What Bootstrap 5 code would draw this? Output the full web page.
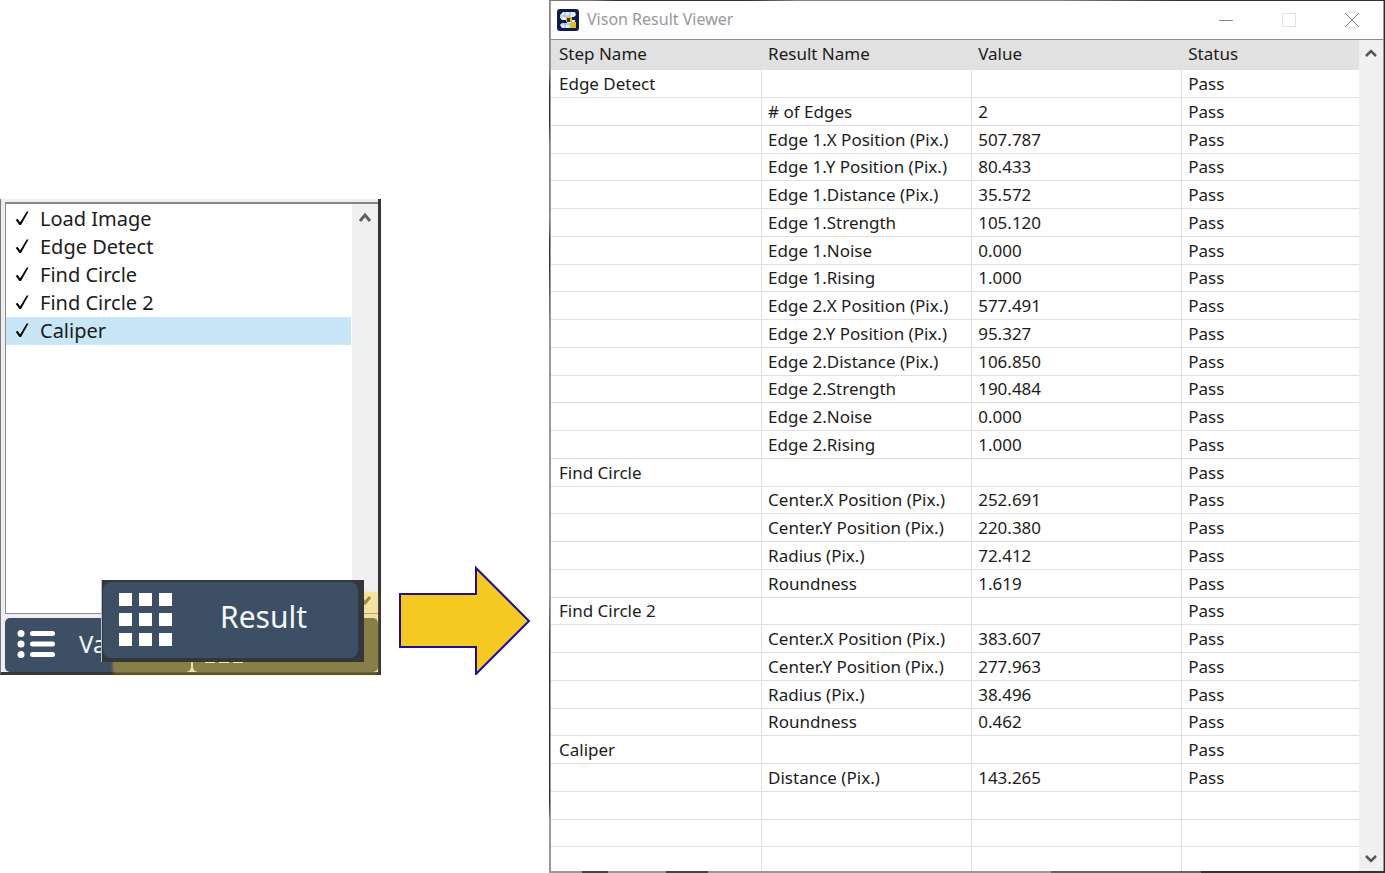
<!DOCTYPE html>
<html lang="en">
<head>
<meta charset="utf-8">
<meta name="viewport" content="width=device-width, initial-scale=1">
<title>Vison Result Viewer</title>
<link href="https://cdn.jsdelivr.net/npm/bootstrap@5.3.0/dist/css/bootstrap.min.css" rel="stylesheet">
<style>
body{font-family:"Noto Sans","Open Sans",sans-serif;color:#1c1c20;background:#fff}
.stage{display:grid;grid-template-columns:381fr 168fr 836fr;height:100vh;min-height:700px}
.stage>*{min-width:0}
/* step list */
.steps-frame{border:solid #35353a;border-width:0 3px 3px 1px;border-left-color:#77777c;padding-left:4px;background:#eeeef2}
.steps-area{border-left:1px solid #8c8c90;border-top:2px solid #858588;border-bottom:1px solid #8c8c90;height:412px;margin-top:3px;background:#fff}
.step-list{padding-top:1px}
.step{height:28px;padding-left:9px;font-size:20px;line-height:28px;margin-right:1px}
.step.active-step{background:#c8e6f7}
.step input{appearance:none;width:15px;height:15px;margin:0 10px 0 0;background:#000;clip-path:polygon(4% 58%,18% 54%,34% 76%,78% 4%,90% 4%,40% 94%,30% 94%)}
.scrollbar-v{width:26px;background:#f0f0f0;flex:none}
.win-frame .scrollbar-v{width:24px}
.plain{border:0;background:none;padding:0;display:block;line-height:0}
.tool{border:0;background:#3d4f64;color:#f4f8fb;border-radius:5px;height:54px;padding:0 0 2px 12px;font-size:24px;text-align:left;white-space:nowrap;overflow:hidden}
.glow{right:0;bottom:0;width:70%;height:80px;background:rgba(249,203,34,.39);box-shadow:-1px 0 3px rgba(249,203,34,.39),0 4px 4px rgba(249,203,34,.2);pointer-events:none}
.callout{left:100px;right:14px;bottom:10px;height:82px;background:#35363c;padding:2px 6px 4px 1px;border-left:1px solid #b9c0c9}
.callout button{border:0;background:#3d4f64;color:#f4f8fb;border-radius:8px;font-size:30px;line-height:1;padding:0 0 0 16px;text-align:left}
.callout span{padding-bottom:6px}
.arrow-cell{padding:565px 0 0 18px}
/* result window */
.win-frame{padding:1px 2px 2px;background:
 linear-gradient(90deg,#999 0 4%,#444 4% 7%,#999 7% 14%,#444 14% 19%,#999 19% 60%,#666 60% 78%,#333 78%) bottom/100% 2px no-repeat,
 linear-gradient(#888 0 8%,#333 10% 14%,#888 17% 25%,#333 28% 30%,#999 38% 68%,#333 74% 92%,#999 94%) left/1px 100% no-repeat,
 linear-gradient(#2d2d2d,#2d2d2d) right/1px 100% no-repeat,
 linear-gradient(90deg,#777 0 5%,#333 8% 24%,#888 30% 60%,#333 75%) top/100% 1px no-repeat,#999}
.titlebar{height:39px;padding-left:6px;font-size:16px;color:#97979b;border-bottom:1px solid #8d8d8d}
.titlebar>span{padding-bottom:2px}
.winbtn{width:63px;height:38px}
.results{table-layout:fixed;width:100%;border-collapse:separate;border-spacing:0;font-size:17px;line-height:20px}
.results th{height:30px;background:#e1e1e1;font-weight:400;padding:0 0 3px 7px}
.results td{height:28px;padding:0 0 0 6px;white-space:nowrap;border-bottom:1px solid #dfdfe1;border-left:1px solid #dfdfe1}
.results tr:nth-child(4n) td{height:27px}
.results td:first-child{border-left:0;padding-left:8px}
.results th:first-child{padding-left:8px}
.results th:nth-child(-n+3){width:26%}
</style>
</head>
<body>
<main class="stage">
 <section class="align-self-center steps-frame position-relative" aria-label="Steps">
  <div class="d-flex steps-area">
   <div class="flex-grow-1 step-list" id="steps"></div>
   <div class="scrollbar-v d-flex flex-column justify-content-between align-items-center py-2">
    <button class="plain" aria-label="Scroll up"><svg width="14" height="12"><path d="M2 9 7 3l5 6" fill="none" stroke="#606060" stroke-width="3"/></svg></button>
    <button class="plain" aria-label="Scroll down"><svg width="14" height="12"><path d="M2 3 7 10l5-6" fill="none" stroke="#606060" stroke-width="3"/></svg></button>
   </div>
  </div>
  <div class="d-flex pt-1" style="gap:2px">
   <button class="tool flex-fill w-50 d-flex align-items-center"><svg width="38" height="28" class="me-4 flex-shrink-0" fill="#fff"><circle cx="4" cy="3.500" r="3.500"/><circle cx="4" cy="14" r="3.500"/><circle cx="4" cy="24.500" r="3.500"/><rect x="13" y="1" width="25" height="5" rx="2.500"/><rect x="13" y="11.500" width="25" height="5" rx="2.500"/><rect x="13" y="22" width="25" height="5" rx="2.500"/></svg>Va</button>
   <button class="tool flex-fill w-50 d-flex align-items-center" aria-label="Result grid"><svg width="38" height="38" fill="#fff"><path d="M0 0h10v10H0zM14 0h10v10H14zM28 0h10v10H28zM0 14h10v10H0zM14 14h10v10H14zM28 14h10v10H28zM0 28h10v10H0zM14 28h10v10H14zM28 28h10v10H28z"/></svg></button>
  </div>
  <div class="glow position-absolute"></div>
  <div class="callout position-absolute">
   <button class="w-100 h-100 d-flex align-items-center"><svg width="53" height="53" class="me-5" fill="#fff"><path d="M0 0h13v13H0zM20 0h13v13H20zM40 0h13v13H40zM0 20h13v13H0zM20 20h13v13H20zM40 20h13v13H40zM0 40h13v13H0zM20 40h13v13H20zM40 40h13v13H40z"/></svg><span>Result</span></button>
  </div>
 </section>
 <div class="arrow-cell"><svg width="132" height="110"><path d="M1 29H77V3L130 56 77 109V82H1z" fill="#f4ca22" stroke="#1e0f96" stroke-width="2"/></svg></div>
 <section class="win-frame d-flex flex-column overflow-hidden">
  <header class="titlebar d-flex align-items-center bg-white flex-shrink-0">
   <svg width="22" height="22" class="me-2" viewBox="0 0 22 22"><rect width="22" height="22" rx="3" fill="#0d1c4d"/><path d="M6 3h12l1 3-2 2h-5v3h6v8H5l-2-3 2-2h5v-3H5L3 9V6z" fill="#e6edf8"/><path d="M3 7h9M5 15h9M8 3v5M13 3v5M8 14v5M13 14v5" stroke="#9aaedb"/><path d="M9 8h6v5H9zM14 13h5v6h-5z" fill="#e5b91d"/><path d="M10 9h3v4h-3z" fill="#3b3a25"/></svg>
   <span class="me-auto">Vison Result Viewer</span>
   <button class="plain winbtn" aria-label="Minimize"><svg width="14" height="14"><path d="M0 7.500h14" stroke="#888"/></svg></button>
   <button class="plain winbtn" aria-label="Maximize"><svg width="14" height="14"><path d="M.5.5h13v13H.5z" fill="none" stroke="#e3e3e3"/></svg></button>
   <button class="plain winbtn" aria-label="Close"><svg width="14" height="14"><path d="M0 0 14 14M14 0 0 14" stroke="#777"/></svg></button>
  </header>
  <div class="d-flex flex-grow-1 overflow-hidden bg-white">
   <div class="flex-grow-1 overflow-hidden">
    <table class="results"><thead><tr><th>Step Name</th><th>Result Name</th><th>Value</th><th>Status</th></tr></thead><tbody id="rows"></tbody></table>
   </div>
   <div class="scrollbar-v d-flex flex-column justify-content-between align-items-center py-2">
    <button class="plain" aria-label="Scroll up"><svg width="12" height="10"><path d="M1 8 6 3l5 5" fill="none" stroke="#555" stroke-width="2.500"/></svg></button>
    <button class="plain" aria-label="Scroll down"><svg width="12" height="10"><path d="M1 3 6 8l5-5" fill="none" stroke="#555" stroke-width="2.500"/></svg></button>
   </div>
  </div>
 </section>
</main>
<script>
document.getElementById('steps').innerHTML=['Load Image','Edge Detect','Find Circle','Find Circle 2','Caliper'].map((s,i)=>
 `<label class="step d-flex align-items-center${i===4?' active-step':''}"><input type="checkbox" checked>${s}</label>`).join('');
const edge=(n,v)=>['X Position (Pix.)','Y Position (Pix.)','Distance (Pix.)','Strength','Noise','Rising'].map((k,i)=>['',`Edge ${n}.${k}`,v[i]]);
const circle=v=>['Center.X Position (Pix.)','Center.Y Position (Pix.)','Radius (Pix.)','Roundness'].map((k,i)=>['',k,v[i]]);
const data=[['Edge Detect','',''],['','# of Edges','2'],
 ...edge(1,['507.787','80.433','35.572','105.120','0.000','1.000']),
 ...edge(2,['577.491','95.327','106.850','190.484','0.000','1.000']),
 ['Find Circle','',''],...circle(['252.691','220.380','72.412','1.619']),
 ['Find Circle 2','',''],...circle(['383.607','277.963','38.496','0.462']),
 ['Caliper','',''],['','Distance (Pix.)','143.265']].map(r=>[...r,'Pass']);
for(let i=0;i<3;i++)data.push(['','','','']);
document.getElementById('rows').innerHTML=data.map(r=>'<tr>'+r.map(c=>`<td>${c}</td>`).join('')+'</tr>').join('');
</script>
<script src="https://cdn.jsdelivr.net/npm/bootstrap@5.3.0/dist/js/bootstrap.bundle.min.js"></script>
</body>
</html>
